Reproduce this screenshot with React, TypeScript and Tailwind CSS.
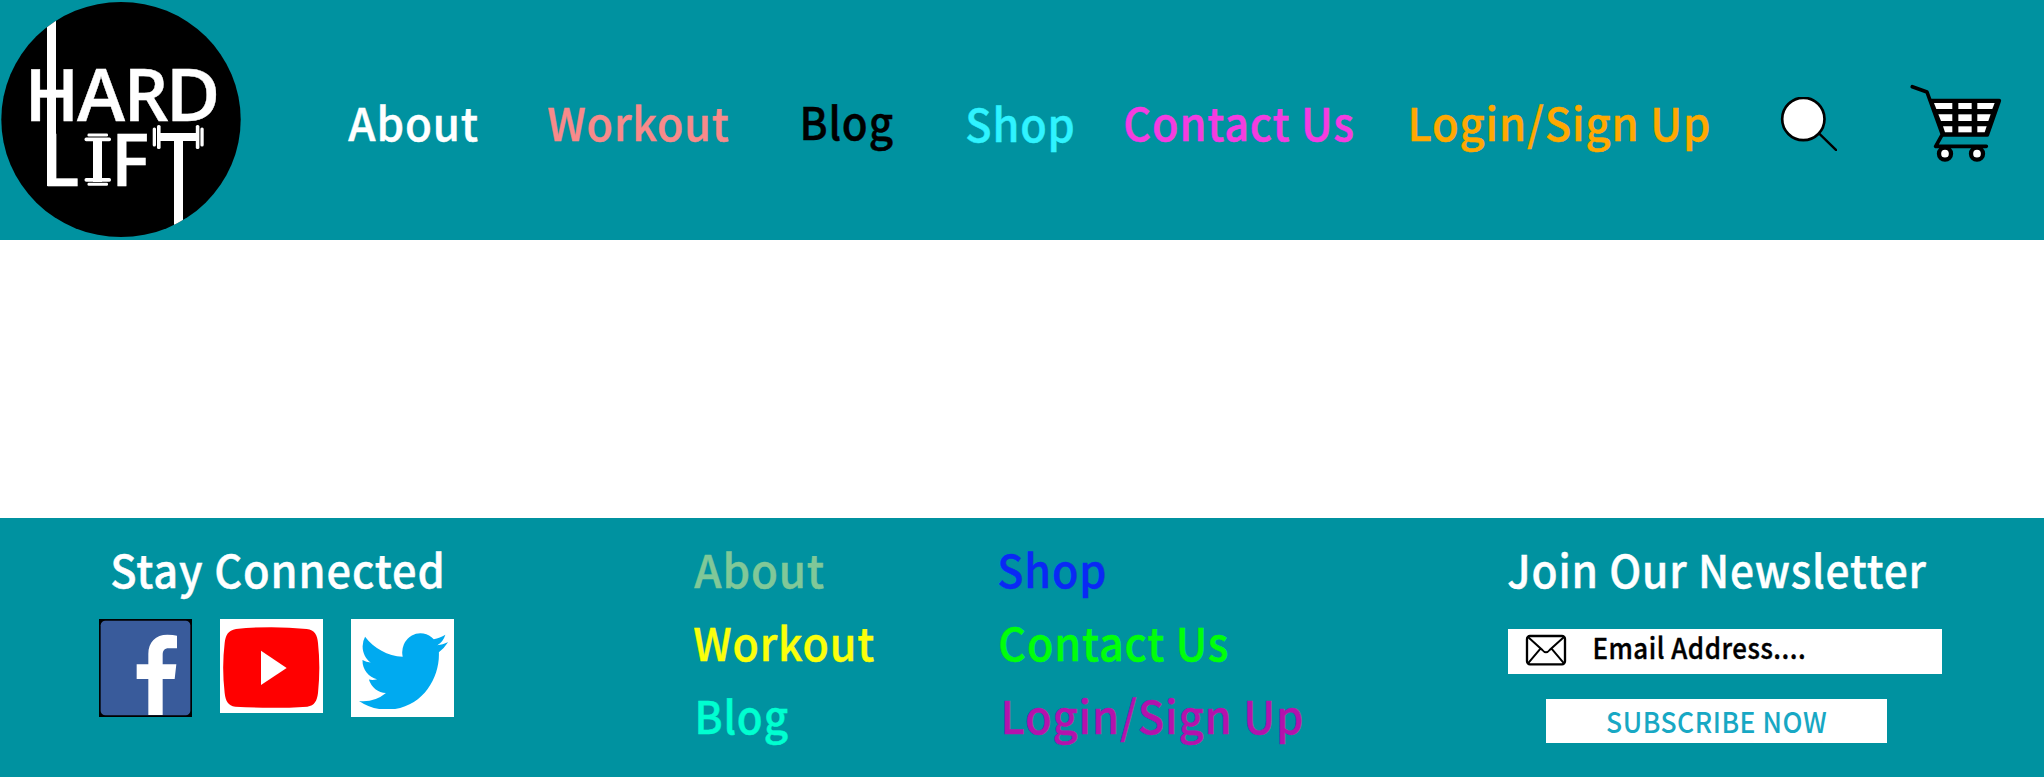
import React from "react";

const FAMILY = '"Noto Sans CJK SC", "Open Sans", sans-serif';
const LOGO_FAMILY = '"Open Sans", "Noto Sans", sans-serif';

function measure(text: string, font: string, spacing = 0) {
  const ctx = document.createElement("canvas").getContext("2d")!;
  ctx.font = font;
  const m = ctx.measureText(text);
  const ink = m.actualBoundingBoxLeft + m.actualBoundingBoxRight + spacing * (text.length - 1);
  return { left: -m.actualBoundingBoxLeft, ink };
}

type LabelProps = {
  text: string;
  width: number;
  size?: number;
  weight?: number;
  stroke?: number;
  className?: string;
};

/** One line of text whose visible glyphs span exactly `width` pixels. */
function Label({ text, width, size = 45.4, weight = 500, stroke = 0.45, className = "" }: LabelProps) {
  const spacing = size * 0.02;
  const { left, ink } = measure(text, `${weight} ${size}px ${FAMILY}`, spacing);
  return (
    <span className={`block shrink-0 whitespace-nowrap h-12 leading-[48px] ${className}`} style={{ width }}>
      <span
        className="inline-block origin-left"
        style={{
          fontFamily: FAMILY,
          fontSize: size,
          fontWeight: weight,
          letterSpacing: spacing,
          WebkitTextStroke: `${stroke}px currentColor`,
          transform: `scaleX(${width / (ink + stroke)}) translateX(${stroke / 2 - left}px)`,
        }}
      >
        {text}
      </span>
    </span>
  );
}

function Glyph({ ch, x, y, width, size = 72 }: { ch: string; x: number; y: number; width: number; size?: number }) {
  const { left, ink } = measure(ch, `600 ${size}px ${LOGO_FAMILY}`);
  return (
    <text
      fontFamily={LOGO_FAMILY}
      fontWeight={600}
      fontSize={size}
      transform={`translate(${x} ${y}) scale(${width / ink} 1) translate(${-left} 0)`}
    >
      {ch}
    </text>
  );
}

function Logo() {
  return (
    <svg className="h-[240px] w-[242px] shrink-0" viewBox="0 0 242 240" fill="#fff">
      <defs>
        <clipPath id="disc">
          <ellipse cx="121" cy="119.5" rx="119.7" ry="117.6" />
        </clipPath>
      </defs>
      <ellipse cx="121" cy="119.5" rx="119.7" ry="117.6" fill="#000" />
      <g clipPath="url(#disc)">
        <rect x="47" y="0" width="9" height="186" />
        <rect x="174" y="136" width="9" height="104" />
      </g>
      <g stroke="#fff" strokeWidth="0.4">
        <Glyph ch="H" x={30.5} y={121} width={42.5} />
        <Glyph ch="A" x={77} y={121} width={48.5} />
        <Glyph ch="R" x={129.5} y={121} width={39} />
        <Glyph ch="D" x={172} y={121} width={44.5} />
        <Glyph ch="L" x={47.2} y={186} width={31.2} />
        <Glyph ch="F" x={117} y={186} width={30} />
      </g>
      <rect x="93" y="138" width="9" height="44" />
      <rect x="87.5" y="133.5" width="20.5" height="3" rx="1.3" />
      <rect x="84.5" y="137.5" width="26.5" height="3.8" rx="1.7" />
      <rect x="84.5" y="178" width="26.5" height="3.8" rx="1.7" />
      <rect x="87.5" y="182.7" width="20.5" height="3" rx="1.3" />
      <rect x="159" y="133" width="38" height="8" />
      <rect x="152.7" y="127.5" width="3.3" height="19" rx="1.5" />
      <rect x="157" y="125" width="3.6" height="24" rx="1.6" />
      <rect x="195.8" y="125" width="3.6" height="24" rx="1.6" />
      <rect x="200.4" y="127.5" width="3.3" height="19" rx="1.5" />
    </svg>
  );
}

function SearchIcon() {
  return (
    <svg className="mt-[96.5px] ml-[71px] h-[54px] w-[57px] shrink-0" viewBox="60 78 171 162">
      <path d="M177 187L229 238" stroke="#000" strokeWidth="7" strokeLinecap="round" />
      <circle cx="130" cy="144" r="63.5" fill="#fff" stroke="#000" strokeWidth="8" />
    </svg>
  );
}

function CartIcon() {
  return (
    <svg className="mt-[84px] ml-[72.5px] h-[78px] w-[92px] shrink-0" viewBox="449 42 276 234">
      <path
        d="M456 50L500 66L546 193L526 229H678"
        fill="none"
        stroke="#000"
        strokeWidth="11"
        strokeLinecap="round"
        strokeLinejoin="round"
      />
      <path d="M513 92H717L681 195H549Z" fill="#000" stroke="#000" strokeWidth="11" strokeLinejoin="round" />
      <g fill="#fff">
        <path d="M521 99H576V117H528Z" />
        <path d="M594 99H634V117H594Z" />
        <path d="M651 99H703L696 117H651Z" />
        <path d="M534 133H576V153H542Z" />
        <path d="M594 133H634V153H594Z" />
        <path d="M651 133H691L684 153H651Z" />
        <path d="M548 169H576V187H554Z" />
        <path d="M594 169H634V187H594Z" />
        <path d="M651 169H679L673 187H651Z" />
      </g>
      <circle cx="554" cy="251" r="18" fill="#fff" stroke="#000" strokeWidth="13" />
      <circle cx="650" cy="251" r="18" fill="#fff" stroke="#000" strokeWidth="13" />
    </svg>
  );
}

function Facebook() {
  return (
    <svg className="h-[98px] w-[93px]" viewBox="57 327 279 294" preserveAspectRatio="none">
      <rect x="57" y="327" width="279" height="294" fill="#000" />
      <rect x="62" y="332" width="269" height="284" rx="14" fill="#395b9b" />
      <path
        fill="#fff"
        d="M205 615V507H170V463H205V432C205 396 227 374 262 374Q280 374 291 377V415H266C253 415 248 422 248 435V463H289L284 507H248V615Z"
      />
    </svg>
  );
}

function YouTube() {
  return (
    <svg className="h-[94px] w-[103px] bg-white" viewBox="420 327 309 282" preserveAspectRatio="none">
      <path
        fill="#f00"
        d="M468 357Q574 346 680 357C705 360 712 376 714 399Q722 473 714 549C711 572 704 587 682 590Q574 597 466 590C444 587 437 574 434 549Q425 473 434 399C437 376 444 361 468 357Z"
      />
      <path fill="#fff" d="M543 422V525L620 474Z" />
    </svg>
  );
}

function Twitter() {
  return (
    <span className="flex h-[98px] w-[103px] bg-white pt-[13.5px] pl-[8px]">
      <svg className="h-[76px] w-[89px]" viewBox="0 2.2 24 19.4" preserveAspectRatio="none" fill="#00aaf0">
        <path d="M23.953 4.57a10 10 0 01-2.825.775 4.958 4.958 0 002.163-2.723c-.951.555-2.005.959-3.127 1.184a4.92 4.92 0 00-8.384 4.482C7.69 8.095 4.067 6.13 1.64 3.162a4.822 4.822 0 00-.666 2.475c0 1.71.87 3.213 2.188 4.096a4.904 4.904 0 01-2.228-.616v.06a4.923 4.923 0 003.946 4.827 4.996 4.996 0 01-2.212.085 4.936 4.936 0 004.604 3.417 9.867 9.867 0 01-6.102 2.105c-.39 0-.779-.023-1.17-.067a13.995 13.995 0 007.557 2.209c9.053 0 13.998-7.496 13.998-13.985 0-.21 0-.42-.015-.63A9.935 9.935 0 0024 4.59z" />
      </svg>
    </span>
  );
}

function Envelope() {
  return (
    <svg className="h-[32px] w-[42px] shrink-0" viewBox="135 343 126 96" fill="none" stroke="#000" strokeWidth="6">
      <rect x="141" y="349" width="114" height="85" rx="9" strokeWidth="7" />
      <path d="M144 352L187 391Q198 405 209 391L252 352M182 386L144 431M214 386L252 431" />
    </svg>
  );
}

export default function App() {
  return (
    <div className="flex h-[778px] w-[2044px] flex-col overflow-hidden bg-white">
      <header className="flex h-[240px] items-start bg-[#0092a0]">
        <Logo />
        <nav className="flex items-start">
          <Label text="About" width={130.5} className="mt-[97px] ml-[106px] text-white" />
          <Label text="Workout" width={181} className="mt-[97px] ml-[69.5px] text-[#f88a8a]" />
          <Label text="Blog" width={90} className="mt-[96px] ml-[73.5px] text-black" />
          <Label text="Shop" width={106.5} className="mt-[98px] ml-[74px] text-[#2ff3ff]" />
          <Label text="Contact Us" width={228.5} className="mt-[97px] ml-[51.5px] text-[#f43ce0]" />
          <Label text="Login/Sign Up" width={298} className="mt-[97px] ml-[58px] text-[#ffa800]" />
        </nav>
        <SearchIcon />
        <CartIcon />
      </header>
      <main className="h-[278px] shrink-0" />
      <footer className="flex h-[259px] items-start bg-[#0092a0] pt-[26px]">
        <section className="ml-[99px] w-[355px]">
          <Label text="Stay Connected" width={329.5} className="ml-[12.5px] text-white" />
          <div className="mt-[27px] flex items-start gap-7">
            <Facebook />
            <YouTube />
            <Twitter />
          </div>
        </section>
        <nav className="ml-[240px] flex w-[305px] flex-col gap-[25px]">
          <Label text="About" width={130.5} className="text-[#80c898]" />
          <Label text="Workout" width={180.5} className="text-[#fbff0a]" />
          <Label text="Blog" width={90} className="ml-[3.5px] text-[#00ffd0]" />
        </nav>
        <nav className="flex w-[509px] flex-col gap-[25px]">
          <Label text="Shop" width={106} className="text-[#0a28f5]" />
          <Label text="Contact Us" width={228} className="ml-px text-[#00ff0a]" />
          <Label text="Login/Sign Up" width={298} className="ml-[5px] text-[#b412ac]" />
        </nav>
        <section className="w-[434px]">
          <Label text="Join Our Newsletter" width={418.5} className="text-white" />
          <div className="mt-[37px] flex h-[45px] items-start bg-white pl-[17px]">
            <span className="mt-[5px] flex">
              <Envelope />
            </span>
            <Label
              text="Email Address...."
              width={210.5}
              size={28.7}
              stroke={0.4}
              className="-mt-[6px] ml-[27px] text-black"
            />
          </div>
          <button className="mt-[25px] ml-[38px] flex h-[44px] w-[341px] items-start justify-center bg-white">
            <Label
              text="SUBSCRIBE NOW"
              width={219}
              size={28.7}
              stroke={0}
              className="-mt-[2px] text-left text-[#18a8c4]"
            />
          </button>
        </section>
      </footer>
    </div>
  );
}
